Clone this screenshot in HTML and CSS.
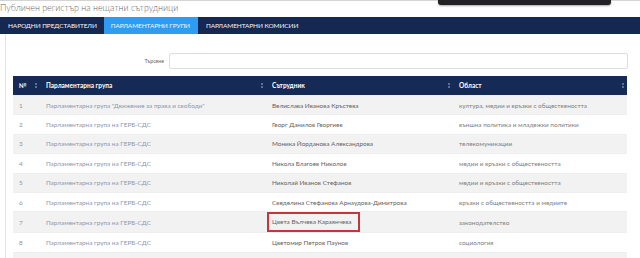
FILE: index.html
```html
<!DOCTYPE html>
<html lang="bg">
<head>
<meta charset="utf-8">
<title>Публичен регистър на нещатни сътрудници</title>
<link rel="stylesheet" href="styles.css">
</head>
<body>
<div class="tooltip"></div>
<h1 class="title">Публичен регистър на нещатни сътрудници</h1>
<nav class="tabs">
  <a class="tab">НАРОДНИ ПРЕДСТАВИТЕЛИ</a>
  <a class="tab active">ПАРЛАМЕНТАРНИ ГРУПИ</a>
  <a class="tab">ПАРЛАМЕНТАРНИ КОМИСИИ</a>
</nav>
<main class="panel">
  <div class="search">
    <label class="search-label">Търсене</label>
    <input class="search-input" type="text">
  </div>
  <table class="grid">
    <colgroup>
      <col class="c1"><col class="c2"><col class="c3"><col class="c4">
    </colgroup>
    <thead>
      <tr>
        <th><span>№</span><i class="sort"></i></th>
        <th><span>Парламентарна група</span><i class="sort"></i></th>
        <th><span>Сътрудник</span><i class="sort"></i></th>
        <th><span>Област</span><i class="sort"></i></th>
      </tr>
    </thead>
    <tbody>
      <tr><td class="num">1</td><td class="grp">Парламентарна група "Движение за права и свободи"</td><td class="name">Велислава Иванова Кръстева</td><td class="area">култура, медии и връзки с обществеността</td></tr>
      <tr><td class="num">2</td><td class="grp">Парламентарна група на ГЕРБ-СДС</td><td class="name">Георг Данилов Георгиев</td><td class="area">външна политика и младежки политики</td></tr>
      <tr><td class="num">3</td><td class="grp">Парламентарна група на ГЕРБ-СДС</td><td class="name">Моника Йорданова Александрова</td><td class="area">телекомуникации</td></tr>
      <tr><td class="num">4</td><td class="grp">Парламентарна група на ГЕРБ-СДС</td><td class="name">Никола Благоев Николов</td><td class="area">медии и връзки с обществеността</td></tr>
      <tr><td class="num">5</td><td class="grp">Парламентарна група на ГЕРБ-СДС</td><td class="name">Николай Иванов Стефанов</td><td class="area">медии и връзки с обществеността</td></tr>
      <tr><td class="num">6</td><td class="grp">Парламентарна група на ГЕРБ-СДС</td><td class="name">Сведелина Стефанова Арнаудова-Димитрова</td><td class="area">връзки с обществеността и медиите</td></tr>
      <tr><td class="num">7</td><td class="grp">Парламентарна група на ГЕРБ-СДС</td><td class="name"><span class="mark">Цвета Вълчева Караянчева</span></td><td class="area">законодателство</td></tr>
      <tr><td class="num">8</td><td class="grp">Парламентарна група на ГЕРБ-СДС</td><td class="name">Цветомир Петров Паунов</td><td class="area">социология</td></tr>
      <tr><td class="num"></td><td class="grp"></td><td class="name"></td><td class="area"></td></tr>
    </tbody>
  </table>
</main>
</body>
</html>
```
FILE: styles.css
```css
html, body {
  margin: 0;
  padding: 0;
  background: #ffffff;
  font-family: Lato, "Open Sans", "Liberation Sans", sans-serif;
  width: 640px;
  height: 258px;
  overflow: hidden;
}

.tooltip {
  position: absolute;
  top: 0;
  left: 438px;
  width: 173px;
  height: 5px;
  background: #222224;
  border-radius: 0 0 3px 3px;
  box-shadow: 0 1px 2px rgba(0,0,0,0.35);
}

.title {
  margin: 0;
  border-top: 1px solid #d4d4d4;
  height: 16px;
  line-height: 13px;
  font-size: 8.9px;
  font-weight: 300;
  color: #666666;
}

.tabs {
  display: flex;
  height: 17px;
  background: #142852;
}

.tab {
  display: flex;
  align-items: center;
  padding: 0 7px 0 8px;
  font-size: 6.5px;
  color: #f4f6fa;
  letter-spacing: -0.1px;
}

.tab.active {
  background: #2f9cf2;
  padding: 0 8px 0 7px;
}

.panel {
  margin-left: 5px;
  border-left: 1px solid #e4e4e4;
  padding: 19px 12px 0 7px;
  height: 224px;
  box-sizing: border-box;
  overflow: hidden;
}

.search {
  display: flex;
  justify-content: flex-end;
  align-items: center;
  gap: 5px;
}

.search-label {
  font-size: 5.2px;
  color: #666;
}

.search-input {
  box-sizing: border-box;
  width: 459px;
  height: 16px;
  margin: 0;
  border: 1px solid #dedede;
  border-radius: 2px;
  background: #fff;
}

.grid {
  margin-top: 7px;
  width: 614px;
  border-collapse: collapse;
  table-layout: fixed;
}

.c1 { width: 27px; }
.c2 { width: 226px; }
.c3 { width: 187px; }
.c4 { width: 174px; }

.grid th {
  height: 19px;
  padding: 0 0 0 6px;
  background: #152a55;
  color: #ffffff;
  font-size: 6.5px;
  font-weight: 700;
  text-align: left;
  position: relative;
}

.sort {
  position: absolute;
  right: 3px;
  top: 7px;
  width: 2px;
  height: 5px;
  background:
    linear-gradient(#5d6f96, #5d6f96) top / 2px 2px no-repeat,
    linear-gradient(#5d6f96, #5d6f96) bottom / 2px 2px no-repeat;
}

.grid td {
  height: 19.4px;
  padding: 0 0 0 6px;
  font-size: 6.4px;
  font-weight: 400;
  white-space: nowrap;
  border-top: 1px solid #efefef;
  box-sizing: border-box;
}

.grid tbody tr:nth-child(odd) td {
  background: #f2f2f2;
}

.num { color: #929292; }
.grp { color: #8a99ae; }
.name { color: #626262; }
.area { color: #7e7e7e; }

.mark {
  display: inline-block;
  margin-left: -5px;
  padding: 5px 6px 5px 3px;
  border: 2px solid #c9333b;
  line-height: 6px;
}
```
